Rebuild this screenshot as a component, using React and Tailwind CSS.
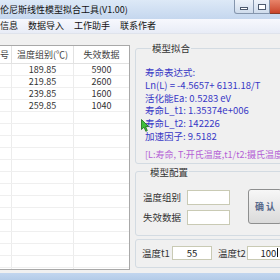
import React from "react";

const dataRows = [
  ["189.85", "5900"],
  ["219.85", "2600"],
  ["239.85", "1600"],
  ["259.85", "1040"],
];

const emptyRows = Array.from({ length: 14 });

function GridRow({ a, b }) {
  return (
    <div className="grid h-[12px] grid-cols-[12px_62px_1fr] border-b border-[#efefef] leading-[12px]">
      <div className="border-r border-[#ececec]"></div>
      <div className="border-r border-[#ececec] text-center">{a}</div>
      <div className="text-center">{b}</div>
    </div>
  );
}

export default function App() {
  return (
    <div className="relative h-[280px] w-[280px] overflow-hidden bg-[#f0f0f0] font-['Noto_Sans_CJK_SC',sans-serif] text-[9.5px] text-[#222]">
      {/* title bar */}
      <div className="flex h-[19px] bg-linear-to-b from-[#dde9f7] to-[#c5d7ee]">
        <div className="whitespace-nowrap pt-[3px] text-[9px] leading-[13px] text-[#111]">
          伦尼斯线性模型拟合工具(V1.00)
        </div>
        <div className="ml-auto flex h-[14px]">
          <div className="flex w-[20px] items-end justify-center rounded-bl-[3px] border border-t-0 border-[#8596ad] bg-linear-to-b from-[#eef3fa] to-[#cfdcec] pb-[3px]">
            <div className="h-[3px] w-[8px] border border-[#4d5a6e] bg-white"></div>
          </div>
          <div className="flex w-[16px] items-center justify-center border-b border-r border-[#8596ad] bg-linear-to-b from-[#eef3fa] to-[#cfdcec]">
            <div className="h-[6px] w-[8px] border border-[#4d5a6e] bg-white"></div>
          </div>
          <div className="w-[10px] border-b border-[#8a3b2a] bg-linear-to-b from-[#e8846a] to-[#c9442a]"></div>
        </div>
      </div>

      {/* menu bar */}
      <div className="flex h-[15px] items-center gap-[10px] border-b border-[#dfe3ec] bg-linear-to-b from-[#f7f8fd] to-[#e8ecf6] text-[9px] leading-[12px] text-[#111]">
        <span>信息</span>
        <span>数据导入</span>
        <span>工作助手</span>
        <span>联系作者</span>
      </div>

      <div className="flex h-[239px]">
        {/* data table */}
        <div className="w-[130px] shrink-0 pt-[11px]">
          <div className="h-[225px] overflow-hidden border border-l-0 border-[#a8a8a8] bg-white text-[9px] text-[#333]">
            <div className="grid h-[18px] grid-cols-[12px_62px_1fr] border-b border-[#e2e2e2] leading-[18px]">
              <div className="overflow-hidden whitespace-nowrap border-r border-[#e2e2e2] text-[#444]">号</div>
              <div className="border-r border-[#e2e2e2] text-center text-[#444]">温度组别(℃)</div>
              <div className="text-center text-[#444]">失效数据</div>
            </div>
            {dataRows.map((r) => (
              <GridRow key={r[0]} a={r[0]} b={r[1]} />
            ))}
            {emptyRows.map((_, i) => (
              <GridRow key={i} a="" b="" />
            ))}
          </div>
        </div>

        {/* right side */}
        <div className="w-[170px] shrink-0 pl-[5px] pt-[8px]">
          <fieldset className="rounded-[3px] border border-[#d3dbe2] pb-[2px] pl-[9px] pt-[12px]">
            <legend className="ml-[6px] px-[1px] leading-[12px] text-[#333]">模型拟合</legend>
            <div className="leading-[12.8px] text-[#3838c6]">
              <div>寿命表达式:</div>
              <div>Ln(L) = -4.5657+ 6131.18/T</div>
              <div>活化能Ea: 0.5283 eV</div>
              <div>寿命L_t1: 1.35374e+006</div>
              <div>寿命L_t2: 142226</div>
              <div>加速因子: 9.5182</div>
            </div>
            <div className="mt-[5px] whitespace-nowrap text-[9px] leading-[13px] text-[#b45fd6]">
              [L:寿命, T:开氏温度,t1/t2:摄氏温度]
            </div>
          </fieldset>

          <fieldset className="mt-[2px] rounded-[3px] border border-[#d3dbe2] pb-[10px] pl-[7px] pt-[12px]">
            <legend className="ml-[6px] px-[1px] leading-[12px] text-[#333]">模型配置</legend>
            <div className="flex items-start">
              <div className="flex flex-col gap-[5px]">
                <div className="flex items-center gap-[6px]">
                  <span className="w-[38px] text-[#333]">温度组别</span>
                  <div className="h-[15px] w-[43px] border border-[#c9cab4] bg-white"></div>
                </div>
                <div className="flex items-center gap-[6px]">
                  <span className="w-[38px] text-[#333]">失效数据</span>
                  <div className="h-[15px] w-[43px] border border-[#c9cab4] bg-white"></div>
                </div>
              </div>
              <button className="-mt-[1px] ml-[18px] h-[35px] w-[34px] rounded-[3px] border border-[#8e8f8f] bg-linear-to-b from-[#f7f7f7] to-[#dadada] text-[9px] font-bold text-[#56688a]">
                确 认
              </button>
            </div>
          </fieldset>

          <div className="mt-[3px] flex h-[29px] items-start rounded-[3px] border border-[#d3dbe2] pl-[6px] pt-[6px]">
            <span className="w-[28px] leading-[14px] text-[#333]">温度t1</span>
            <div className="ml-[2px] h-[14px] w-[40px] border border-[#c9cab4] bg-white text-center leading-[12px]">55</div>
            <span className="ml-[6px] w-[28px] leading-[14px] text-[#333]">温度t2</span>
            <div className="ml-[1px] flex h-[14px] w-[45px] items-center justify-center border border-[#c9cab4] bg-white leading-[12px]">
              100<span className="ml-[1px] inline-block h-[9px] w-[1px] bg-[#111]"></span>
            </div>
          </div>
        </div>
      </div>

      {/* window frame bottom */}
      <div className="h-[7px] bg-linear-to-b from-[#c2d6ef] to-[#b3cbe8]"></div>

      {/* mouse pointer */}
      <svg className="absolute left-[141px] top-[119px]" width="8" height="13" viewBox="0 0 8 13">
        <path d="M0.5 0.5 L0.5 10.5 L3 8.2 L4.8 12.3 L6.3 11.6 L4.6 7.6 L7.6 7.6 Z" fill="#3fbf3a" stroke="#1d6e1b" strokeWidth="0.8" />
      </svg>
    </div>
  );
}
